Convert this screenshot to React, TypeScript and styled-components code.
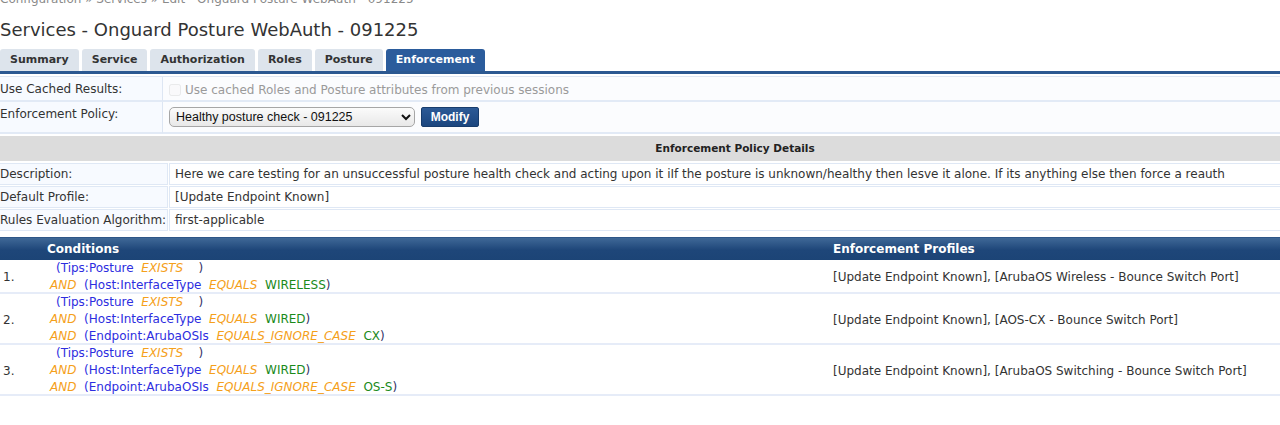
import styled, { createGlobalStyle } from 'styled-components';

const GlobalStyle = createGlobalStyle`
    html, body {
        margin: 0;
        padding: 0;
        background: #ffffff;
        overflow: hidden;
    }
    body {
        font-family: 'DejaVu Sans', Verdana, sans-serif;
        font-size: 12px;
        color: #333333;
    }
`;

const tabs = ['Summary', 'Service', 'Authorization', 'Roles', 'Posture', 'Enforcement'];

type Clause = { attr: string; op: string; value: string };

const rules: { conditions: Clause[]; profiles: string }[] = [
    {
        conditions: [
            { attr: 'Tips:Posture', op: 'EXISTS', value: '' },
            { attr: 'Host:InterfaceType', op: 'EQUALS', value: 'WIRELESS' },
        ],
        profiles: '[Update Endpoint Known], [ArubaOS Wireless - Bounce Switch Port]',
    },
    {
        conditions: [
            { attr: 'Tips:Posture', op: 'EXISTS', value: '' },
            { attr: 'Host:InterfaceType', op: 'EQUALS', value: 'WIRED' },
            { attr: 'Endpoint:ArubaOSIs', op: 'EQUALS_IGNORE_CASE', value: 'CX' },
        ],
        profiles: '[Update Endpoint Known], [AOS-CX - Bounce Switch Port]',
    },
    {
        conditions: [
            { attr: 'Tips:Posture', op: 'EXISTS', value: '' },
            { attr: 'Host:InterfaceType', op: 'EQUALS', value: 'WIRED' },
            { attr: 'Endpoint:ArubaOSIs', op: 'EQUALS_IGNORE_CASE', value: 'OS-S' },
        ],
        profiles: '[Update Endpoint Known], [ArubaOS Switching - Bounce Switch Port]',
    },
];

export default function App() {
    return (
        <>
            <GlobalStyle />
            <Page>
                <Breadcrumb>Configuration » Services » Edit - Onguard Posture WebAuth - 091225</Breadcrumb>
                <Title>Services - Onguard Posture WebAuth - 091225</Title>
                <TabBar>
                    {tabs.map((t) => (
                        <Tab key={t} $active={t === 'Enforcement'}>
                            {t}
                        </Tab>
                    ))}
                </TabBar>

                <FormTable>
                    <LabelCell>Use Cached Results:</LabelCell>
                    <ValueCell>
                        <CheckLabel>
                            <Checkbox type="checkbox" disabled />
                            Use cached Roles and Posture attributes from previous sessions
                        </CheckLabel>
                    </ValueCell>
                    <LabelCell $tall>Enforcement Policy:</LabelCell>
                    <ValueCell $tall>
                        <Select defaultValue="hp">
                            <option value="hp">Healthy posture check - 091225</option>
                        </Select>
                        <ModifyButton>Modify</ModifyButton>
                    </ValueCell>
                </FormTable>

                <SectionHeader>Enforcement Policy Details</SectionHeader>

                <DetailsTable>
                    <DetailLabel>Description:</DetailLabel>
                    <DetailValue>
                        Here we care testing for an unsuccessful posture health check and acting upon it iIf the
                        posture is unknown/healthy then lesve it alone. If its anything else then force a reauth
                    </DetailValue>
                    <DetailLabel>Default Profile:</DetailLabel>
                    <DetailValue>[Update Endpoint Known]</DetailValue>
                    <DetailLabel>Rules Evaluation Algorithm:</DetailLabel>
                    <DetailValue>first-applicable</DetailValue>
                </DetailsTable>

                <RulesTable>
                    <HeadCell />
                    <HeadCell>Conditions</HeadCell>
                    <HeadCell>Enforcement Profiles</HeadCell>
                    {rules.map((r, i) => (
                        <RuleRow key={i}>
                            <NumCell>{i + 1}.</NumCell>
                            <CondCell>
                                {r.conditions.map((c, j) => (
                                    <CondLine key={j} $first={j === 0}>
                                        {j > 0 && <Op>AND</Op>}
                                        {j > 0 && '  '}
                                        <Attr>({c.attr}</Attr>
                                        {'  '}
                                        <Op>{c.op}</Op>
                                        {'  '}
                                        {c.value && <Val>{c.value}</Val>}
                                        <Paren>{c.value ? ')' : '  )'}</Paren>
                                    </CondLine>
                                ))}
                            </CondCell>
                            <ProfileCell>{r.profiles}</ProfileCell>
                        </RuleRow>
                    ))}
                </RulesTable>
            </Page>
        </>
    );
}

const Page = styled.div`
    width: 1470px;
    display: flex;
    flex-direction: column;
`;

const Breadcrumb = styled.div`
    margin-top: -10px;
    font-size: 12px;
    line-height: 18px;
    color: #8a8a8a;
`;

const Title = styled.h1`
    margin: 0 0 6px;
    padding-top: 9px;
    font-size: 18px;
    font-weight: normal;
    line-height: 26px;
    color: #333333;
`;

const TabBar = styled.div`
    display: flex;
    gap: 3px;
    border-bottom: 3px solid #2b5891;
    height: 22px;
`;

const Tab = styled.div<{ $active?: boolean }>`
    padding: 0 10px;
    height: 22px;
    line-height: 22px;
    font-size: 11px;
    font-weight: bold;
    border-radius: 3px 3px 0 0;
    background: ${(p) => (p.$active ? '#2b5c9c' : '#dde4ec')};
    color: ${(p) => (p.$active ? '#ffffff' : '#333333')};
`;

const FormTable = styled.div`
    display: grid;
    grid-template-columns: 163px 1fr;
    margin-top: 2px;
    border-top: 1px solid #dfe7f3;
`;

const LabelCell = styled.div<{ $tall?: boolean }>`
    padding-top: ${(p) => (p.$tall ? '3px' : '1px')};
    line-height: ${(p) => (p.$tall ? '18px' : '22px')};
    background: #f7faff;
    border-bottom: 2px solid #e2eaf6;
    border-right: 1px solid #dde6f3;
    box-sizing: border-box;
    height: ${(p) => (p.$tall ? '32px' : '25px')};
    white-space: nowrap;
`;

const ValueCell = styled.div<{ $tall?: boolean }>`
    display: flex;
    align-items: center;
    gap: 6px;
    padding-left: 6px;
    padding-top: ${(p) => (p.$tall ? '0' : '2px')};
    background: #fbfcfe;
    border-bottom: 2px solid #e2eaf6;
    box-sizing: border-box;
    height: ${(p) => (p.$tall ? '32px' : '25px')};
`;

const CheckLabel = styled.label`
    display: flex;
    align-items: center;
    gap: 4px;
    color: #9a9a9a;
`;

const Checkbox = styled.input`
    margin: 0;
    width: 12px;
    height: 12px;
    opacity: 0.4;
`;

const Select = styled.select`
    width: 246px;
    height: 20px;
    padding: 0 2px;
    font-family: 'Liberation Sans', Arial, sans-serif;
    font-size: 12.5px;
    color: #111111;
    border: 1px solid #a6a6a6;
    border-radius: 5px;
    background: linear-gradient(#fbfbfb, #e8e8e8);
`;

const ModifyButton = styled.button`
    height: 20px;
    width: 58px;
    padding: 0;
    font-family: 'Liberation Sans', Arial, sans-serif;
    font-size: 12px;
    font-weight: bold;
    color: #ffffff;
    background: linear-gradient(#2c5a96, #1b467f);
    border: 1px solid #173c6c;
    border-radius: 2px;
`;

const SectionHeader = styled.div`
    margin-top: 2px;
    height: 25px;
    line-height: 25px;
    text-align: center;
    font-size: 10.5px;
    font-weight: bold;
    background: #dcdcdc;
    color: #222222;
`;

const DetailsTable = styled.div`
    display: grid;
    grid-template-columns: 168px 1fr;
    column-gap: 1px;
    row-gap: 1px;
    padding-top: 2px;
`;

const DetailLabel = styled.div`
    height: 22px;
    box-sizing: border-box;
    line-height: 20px;
    background: #f7faff;
    border: 1px solid #dfe8f5;
    border-left: none;
    white-space: nowrap;
`;

const DetailValue = styled.div`
    height: 22px;
    box-sizing: border-box;
    line-height: 20px;
    padding-left: 5px;
    background: #ffffff;
    border: 1px solid #dfe8f5;
    white-space: nowrap;
`;

const RulesTable = styled.div`
    margin-top: 6px;
    display: grid;
    grid-template-columns: 47px 786px 1fr;
    border-top: 1px solid #2e5687;
`;

const HeadCell = styled.div`
    height: 22px;
    line-height: 22px;
    font-size: 12px;
    font-weight: bold;
    color: #ffffff;
    background: linear-gradient(#3f6897, #1e4679 55%, #1c4476);
`;

const RuleRow = styled.div`
    display: contents;
`;

const NumCell = styled.div`
    display: flex;
    align-items: center;
    padding-left: 3px;
    box-shadow: inset 0 -2px 0 #e6ecf8;
`;

const CondCell = styled.div`
    padding: 0 0 0 3px;
    box-shadow: inset 0 -2px 0 #e6ecf8;
`;

const CondLine = styled.div<{ $first?: boolean }>`
    line-height: 17px;
    white-space: pre;
    padding-left: ${(p) => (p.$first ? '6px' : '0')};
`;

const ProfileCell = styled.div`
    display: flex;
    align-items: center;
    box-shadow: inset 0 -2px 0 #e6ecf8;
`;

const Attr = styled.span`
    color: #2d2de0;
`;

const Op = styled.span`
    color: #f5a01a;
    font-style: italic;
`;

const Val = styled.span`
    color: #1b8a1b;
`;

const Paren = styled.span`
    color: #333366;
`;
